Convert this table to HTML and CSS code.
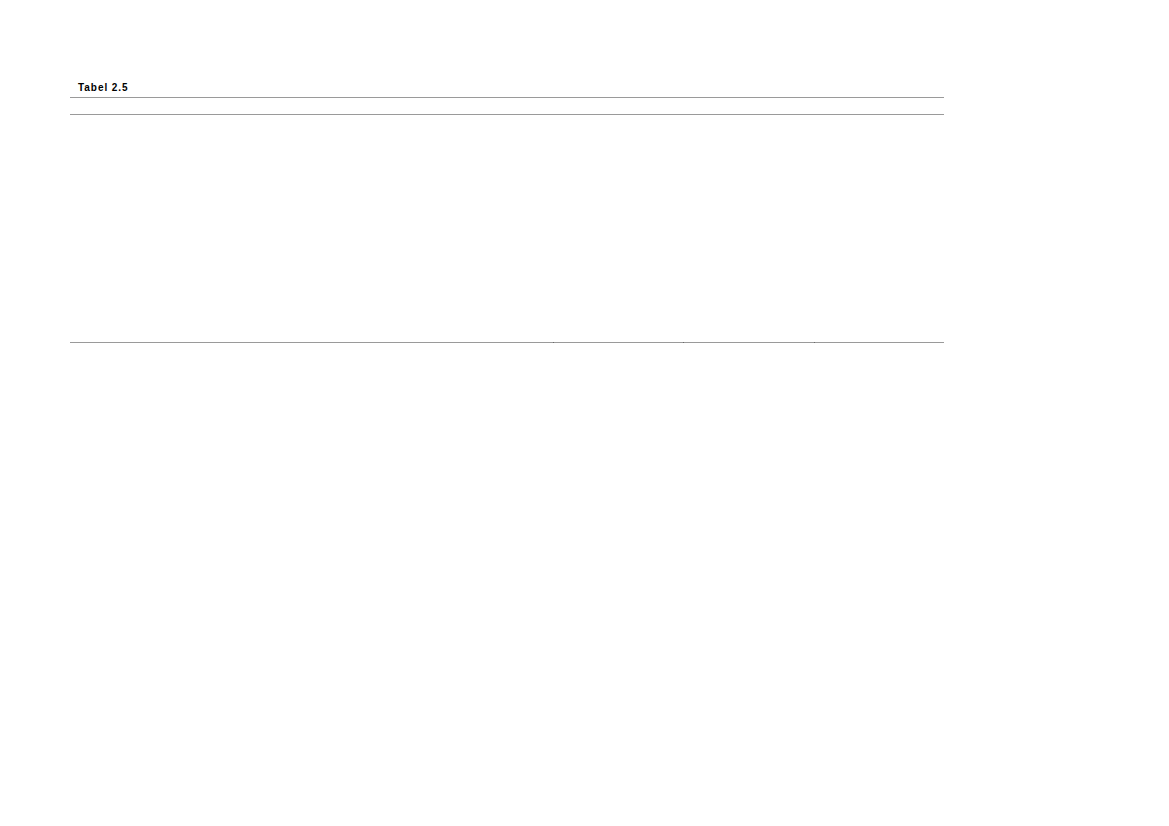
FILE: index.html
```html
<!DOCTYPE html>
<html lang="en">
<head>
    <meta charset="UTF-8" />
    <meta name="viewport" content="width=device-width, initial-scale=1.0" />
    <title>Tabel 2.5</title>
    <link rel="stylesheet" href="styles.css">
</head>
<body>
    <div class="sheet">
        <div class="table-title">Tabel 2.5</div>
        <div class="table-head"></div>
        <div class="table-body">
            <div class="col col-main"></div>
            <div class="col"></div>
            <div class="col"></div>
            <div class="col"></div>
        </div>
    </div>
</body>
</html>
```

FILE: styles.css
```css
* {
    margin: 0;
    padding: 0;
    box-sizing: border-box;
}

body {
    background: #fff;
    font-family: 'Liberation Sans', Arial, sans-serif;
    color: #000;
}

.sheet {
    width: 874px;
    margin-left: 70px;
    padding-top: 82px;
}

.table-title {
    font-size: 10px;
    font-weight: 700;
    line-height: 12px;
    letter-spacing: 0.95px;
    padding: 0 0 3px 8px;
    border-bottom: 1px solid #9a9a9a;
}

.table-head {
    height: 17px;
    border-bottom: 1px solid #9a9a9a;
}

.table-body {
    display: grid;
    grid-template-columns: 483px 130px 131px 130px;
    height: 228px;
}

.col {
    position: relative;
    border-bottom: 1px solid #9a9a9a;
}

.col + .col::before {
    content: "";
    position: absolute;
    left: 0;
    bottom: -1px;
    width: 1px;
    height: 1px;
    background: #6a6a6a;
}
```
